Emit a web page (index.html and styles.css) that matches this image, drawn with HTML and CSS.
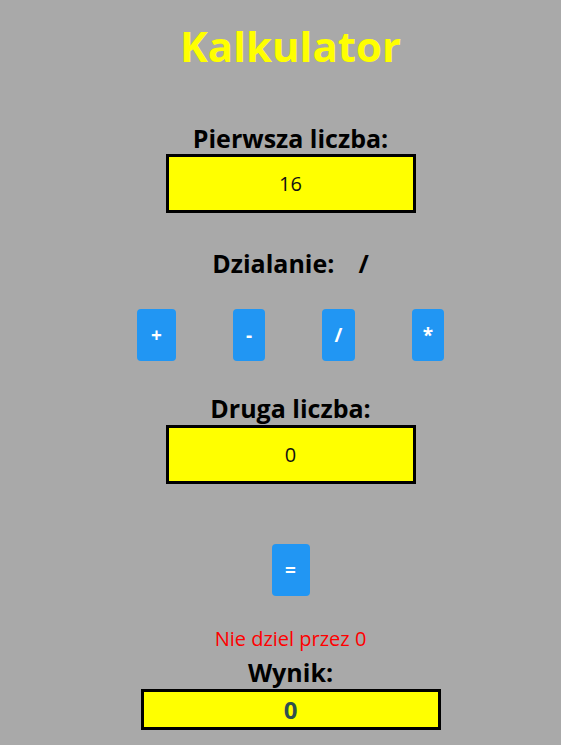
FILE: index.html
```html
<!DOCTYPE html>
<html lang="pl">
<head>
<meta charset="utf-8">
<title>Kalkulator</title>
<link rel="stylesheet" href="styles.css">
</head>
<body>
<main class="app">
  <h1 class="title">Kalkulator</h1>
  <label class="label label-first" for="a">Pierwsza liczba:</label>
  <input class="field" id="a" type="text" value="16">
  <div class="label label-op">Dzialanie:<span class="op-sign">/</span></div>
  <div class="ops">
    <button class="btn btn-plus">+</button>
    <button class="btn btn-minus">-</button>
    <button class="btn btn-div">/</button>
    <button class="btn btn-mul">*</button>
  </div>
  <label class="label label-second" for="b">Druga liczba:</label>
  <input class="field" id="b" type="text" value="0">
  <button class="btn btn-eq">=</button>
  <p class="error">Nie dziel przez 0</p>
  <div class="label label-result">Wynik:</div>
  <div class="result">0</div>
</main>
</body>
</html>
```
FILE: styles.css
```css
html, body {
  margin: 0;
  padding: 0;
  background: #a9a9a9;
}
body {
  font-family: "Open Sans", "Noto Sans", sans-serif;
  color: #000;
}
.app {
  display: flex;
  flex-direction: column;
  align-items: center;
  padding: 0 8px 0 28px;
}
.title {
  margin: 18px 0 0;
  font-size: 42px;
  line-height: 56px;
  font-weight: 700;
  color: #ffff00;
}
.label {
  display: block;
  font-size: 25px;
  line-height: 30px;
  font-weight: 700;
}
.label-first { margin-top: 49px; }
.label-op { margin-top: 35px; }
.op-sign { margin-left: 24px; }
.label-second { margin-top: 32px; }
.label-result { margin-top: 6px; }
.field {
  box-sizing: border-box;
  width: 250px;
  height: 59px;
  margin: 1px 0 0;
  border: 3px solid #000;
  background: #ffff00;
  font-family: inherit;
  font-size: 20px;
  text-align: center;
  color: #111;
  outline: none;
  padding: 0;
}
#b { margin-top: 2px; }
.ops {
  display: flex;
  gap: 57px;
  margin-top: 31px;
}
.btn {
  box-sizing: border-box;
  height: 52px;
  padding: 0;
  border: none;
  border-radius: 4px;
  background: #2196f3;
  color: #fff;
  font-family: inherit;
  font-size: 19px;
  font-weight: 700;
}
.btn-plus { width: 39px; }
.btn-minus { width: 32px; }
.btn-div { width: 33px; }
.btn-mul { width: 32px; }
.btn-eq { width: 38px; margin-top: 60px; }
.error {
  margin: 31px 0 0;
  font-size: 20px;
  line-height: 24px;
  color: #ff0000;
}
.result {
  box-sizing: border-box;
  width: 300px;
  height: 41px;
  margin-top: 2px;
  border: 3px solid #000;
  background: #ffff00;
  font-size: 24px;
  line-height: 35px;
  font-weight: 700;
  text-align: center;
  color: #2f4f4f;
}
```
